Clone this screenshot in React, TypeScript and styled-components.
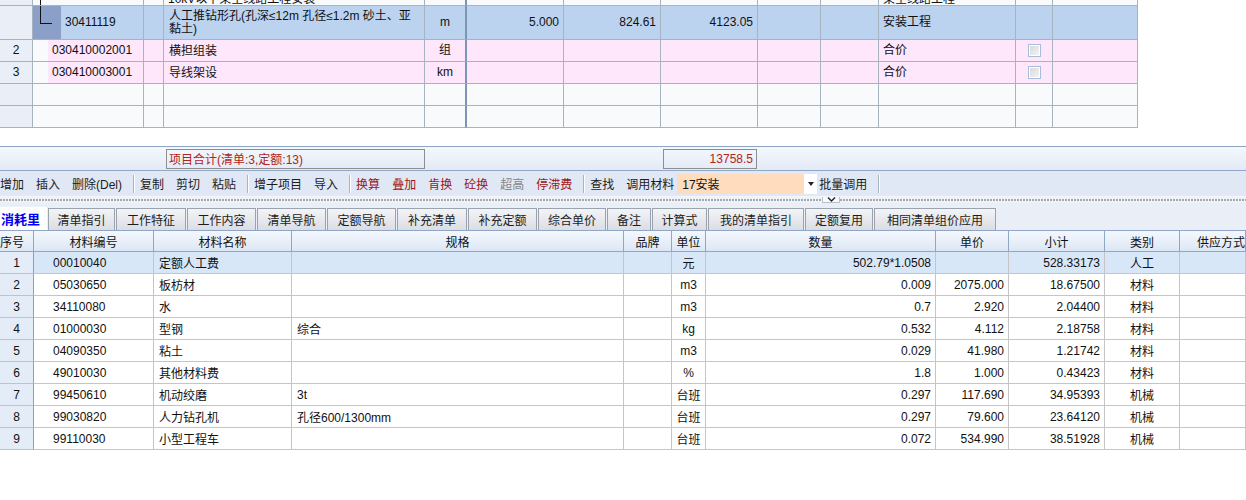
import React from 'react';
import styled, { createGlobalStyle } from 'styled-components';

const GlobalStyle = createGlobalStyle`
  html, body { margin: 0; padding: 0; background: #fff; overflow: hidden; }
  body { font: 12px "Liberation Sans", "Noto Sans CJK SC", sans-serif; color: #111; }
  * { box-sizing: border-box; }
`;

// ---------- top grid (清单) ----------
type Tone = 'head' | 'blue' | 'pink' | 'empty';
const toneBg: Record<Tone, string> = {
  head: '#e9eef7',
  blue: '#bcd3f0',
  pink: '#fee6fb',
  empty: '#f9fafc',
};
type Align = 'left' | 'center' | 'right';
const justify = (a?: Align) => (a === 'right' ? 'flex-end' : a === 'center' ? 'center' : 'flex-start');

const topCols = [33, 111, 20, 261, 42, 97, 97, 97, 63, 58, 137, 37, 85];

const TopGrid = styled.div`
  display: grid;
  width: 1138px;
  grid-template-columns: ${topCols.map((c) => c + 'px').join(' ')};
  grid-template-rows: 6px 34px 22px 22px 22px 22px;
`;

const TCell = styled.div<{ $tone: Tone; $align?: Align; $thick?: boolean; $bare?: boolean; $cut?: boolean }>`
  display: flex;
  align-items: ${(p) => (p.$cut ? 'flex-end' : 'center')};
  justify-content: ${(p) => justify(p.$align)};
  padding: ${(p) => (p.$bare ? '0' : '0 4px')};
  background: ${(p) => toneBg[p.$tone]};
  border-right: ${(p) => (p.$thick ? '2px solid #7d94b5' : '1px solid #a8b3c0')};
  border-bottom: 1px solid #a8b3c0;
  overflow: hidden;
  white-space: nowrap;
  line-height: 13px;
`;

// only the lower strokes of the row above show in the reference
const CutText = styled.span`
  line-height: 12px;
  flex: none;
`;

const TreeStub = styled.span`
  align-self: stretch;
  margin-left: 7px;
  border-left: 1px solid #111;
`;

const Indent = styled.span`
  align-self: stretch;
  width: 15px;
  flex: none;
  background: #f9fafc;
`;

const TreeBlock = styled.span`
  align-self: stretch;
  width: 28px;
  flex: none;
  background: #8aa0c8;
  display: flex;
`;

const TreeLine = styled.span`
  margin-left: 7px;
  width: 12px;
  height: 18px;
  border-left: 1px solid #111;
  border-bottom: 1px solid #111;
`;

const CodeText = styled.span`
  padding-left: 4px;
`;

const Name = styled.span`
  padding-left: 1px;
  padding-top: 1px;
`;

const CheckBox = styled.span`
  width: 13px;
  height: 13px;
  border: 1px solid #a6bedb;
  background: linear-gradient(135deg, #d6d6d6, #f6f6f6);
  box-shadow: inset 0 0 0 1px #fff;
`;

type TopRowData = {
  tone: 'blue' | 'pink' | 'empty';
  no?: string;
  code?: string;
  name?: React.ReactNode;
  unit?: string;
  qty?: string;
  price?: string;
  total?: string;
  kind?: string;
  check?: boolean;
};

const topRows: TopRowData[] = [
  {
    tone: 'blue',
    code: '30411119',
    name: (
      <>
        人工推钻形孔(孔深≤12m 孔径≤1.2m 砂土、亚
        <br />
        黏土)
      </>
    ),
    unit: 'm',
    qty: '5.000',
    price: '824.61',
    total: '4123.05',
    kind: '安装工程',
  },
  { tone: 'pink', no: '2', code: '030410002001', name: '横担组装', unit: '组', kind: '合价', check: true },
  { tone: 'pink', no: '3', code: '030410003001', name: '导线架设', unit: 'km', kind: '合价', check: true },
  { tone: 'empty' },
  { tone: 'empty' },
];

const TopRow = ({ r }: { r: TopRowData }) => (
  <>
    <TCell $tone="head" $align="center">{r.no}</TCell>
    <TCell $tone={r.tone} $bare>
      {r.tone === 'blue' && (
        <TreeBlock>
          <TreeLine />
        </TreeBlock>
      )}
      {r.tone === 'pink' && <Indent />}
      {r.code && <CodeText>{r.code}</CodeText>}
    </TCell>
    <TCell $tone={r.tone} />
    <TCell $tone={r.tone}>
      <Name>{r.name}</Name>
    </TCell>
    <TCell $tone={r.tone} $align="center" $thick>{r.unit}</TCell>
    <TCell $tone={r.tone} $align="right">{r.qty}</TCell>
    <TCell $tone={r.tone} $align="right">{r.price}</TCell>
    <TCell $tone={r.tone} $align="right">{r.total}</TCell>
    <TCell $tone={r.tone} />
    <TCell $tone={r.tone} />
    <TCell $tone={r.tone}>{r.kind}</TCell>
    <TCell $tone={r.tone} $align="center">{r.check && <CheckBox />}</TCell>
    <TCell $tone={r.tone} />
  </>
);

// ---------- summary / toolbar ----------
const SummaryBar = styled.div`
  margin-top: 18px;
  height: 24px;
  border-top: 1px solid #8fa5c4;
  background: linear-gradient(#f4f8fd, #e3eaf6);
  display: grid;
  grid-template-columns: 166px 259px 238px 94px;
  align-items: center;
`;

const SumBox = styled.div<{ $col: number; $right?: boolean }>`
  grid-column: ${(p) => p.$col};
  height: 20px;
  border: 1px solid #8e8e8e;
  color: #b3221b;
  padding: 0 3px 0 2px;
  display: flex;
  align-items: center;
  justify-content: ${(p) => (p.$right ? 'flex-end' : 'flex-start')};
  font-size: 12px;
`;

const Toolbar = styled.div`
  height: 27px;
  border-top: 1px solid #91a7c6;
  border-bottom: 1px solid #f4f6fa;
  background: #e1e8f5;
  display: flex;
  align-items: center;
`;

const ToolItem = styled.span<{ $color?: string }>`
  color: ${(p) => p.$color || '#1c1c1c'};
  margin-right: 12px;
  white-space: nowrap;
`;

const ToolSep = styled.span`
  width: 1px;
  height: 18px;
  background: #a9b3c1;
  box-shadow: 1px 0 0 #fff;
  margin: 0 6px 0 -1px;
`;

const Combo = styled.div`
  display: flex;
  height: 20px;
  margin: 0 2px 0 -9px;
`;

const ComboField = styled.div`
  width: 127px;
  background: #ffdcbd;
  padding-left: 5px;
  display: flex;
  align-items: center;
`;

const ComboArrow = styled.div`
  width: 13px;
  background: #fff;
  display: flex;
  align-items: center;
  justify-content: center;
  &::after {
    content: '';
    border-left: 3px solid transparent;
    border-right: 3px solid transparent;
    border-top: 4px solid #222;
  }
`;

type Tool = { t: string; c?: string } | 'sep';
const RED = '#9e1414';
const tools: Tool[] = [
  { t: '增加' },
  { t: '插入' },
  { t: '删除(Del)' },
  'sep',
  { t: '复制' },
  { t: '剪切' },
  { t: '粘贴' },
  'sep',
  { t: '增子项目' },
  { t: '导入' },
  'sep',
  { t: '换算', c: RED },
  { t: '叠加', c: RED },
  { t: '肯换', c: RED },
  { t: '砼换', c: RED },
  { t: '超高', c: '#858585' },
  { t: '停滞费', c: RED },
  'sep',
  { t: '查找' },
  { t: '调用材料' },
];

// ---------- splitter / tabs ----------
const Splitter = styled.div`
  height: 6px;
  background: #eef1f6;
  display: flex;
  align-items: center;
`;

const Dots = styled.div<{ $w?: number }>`
  flex: ${(p) => (p.$w ? `0 0 ${p.$w}px` : '1')};
  height: 2px;
  background: repeating-linear-gradient(90deg, #a3abb8 0 2px, transparent 2px 3px);
`;

const Handle = styled.div`
  width: 18px;
  height: 6px;
  align-self: flex-start;
  background: #f7f9fb;
  border: 1px solid #b7c1ce;
  border-top: none;
  display: flex;
  justify-content: center;
`;

const TabStrip = styled.div`
  height: 27px;
  background: #e9eef7;
  display: flex;
  align-items: flex-end;
  gap: 1px;
`;

const Tab = styled.div<{ $w: number; $active?: boolean }>`
  width: ${(p) => p.$w}px;
  height: ${(p) => (p.$active ? 23 : 22)}px;
  display: flex;
  align-items: center;
  justify-content: ${(p) => (p.$active ? 'flex-start' : 'center')};
  padding-left: ${(p) => (p.$active ? 1 : 0)}px;
  white-space: nowrap;
  border: ${(p) => (p.$active ? 'none' : '1px solid #9aa3ae')};
  border-bottom: none;
  background: ${(p) => (p.$active ? '#fff' : 'linear-gradient(#f3f4f7, #dadde3)')};
  color: ${(p) => (p.$active ? '#0000f2' : '#1c1c1c')};
  font-weight: ${(p) => (p.$active ? 700 : 400)};
  font-size: ${(p) => (p.$active ? 13 : 12)}px;
`;

const tabs: [string, number][] = [
  ['清单指引', 67],
  ['工作特征', 70],
  ['工作内容', 69],
  ['清单导航', 69],
  ['定额导航', 69],
  ['补充清单', 70],
  ['补充定额', 69],
  ['综合单价', 68],
  ['备注', 44],
  ['计算式', 55],
  ['我的清单指引', 96],
  ['定额复用', 68],
  ['相同清单组价应用', 122],
];

// ---------- materials grid ----------
const MatGrid = styled.div`
  display: grid;
  grid-template-columns: 34px 120px 138px 332px 48px 34px 230px 73px 96px 75px 1fr;
  grid-auto-rows: 22px;
`;

const HCell = styled.div<{ $align?: Align; $pad?: number }>`
  display: flex;
  align-items: center;
  justify-content: ${(p) => justify(p.$align)};
  padding-left: ${(p) => p.$pad || 0}px;
  white-space: nowrap;
  overflow: hidden;
  border-top: 1px solid #8fa6c6;
  border-bottom: 1px solid #8fa6c6;
  border-right: 1px solid #8fa6c6;
  background: linear-gradient(#f4f8fd, #dce7f5);
`;

const MCell = styled.div<{ $align?: Align; $sel?: boolean; $pl?: number; $pr?: number }>`
  display: flex;
  align-items: center;
  justify-content: ${(p) => justify(p.$align)};
  padding: 0 ${(p) => p.$pr || 0}px 0 ${(p) => p.$pl || 0}px;
  white-space: nowrap;
  overflow: hidden;
  background: ${(p) => (p.$sel ? '#d8e7f8' : '#fff')};
  border-right: 1px solid #c5c5c5;
  border-bottom: 1px solid #c5c5c5;
`;

const NoCell = styled.div`
  display: flex;
  align-items: center;
  justify-content: center;
  background: #e4ecf8;
  border-right: 1px solid #88a2c4;
  border-bottom: 1px solid #b4c4da;
`;

type Mat = [string, string, string, string, string, string, string, string, string];
const mats: Mat[] = [
  ['00010040', '定额人工费', '', '元', '502.79*1.0508', '', '528.33173', '人工', ''],
  ['05030650', '板枋材', '', 'm3', '0.009', '2075.000', '18.67500', '材料', ''],
  ['34110080', '水', '', 'm3', '0.7', '2.920', '2.04400', '材料', ''],
  ['01000030', '型钢', '综合', 'kg', '0.532', '4.112', '2.18758', '材料', ''],
  ['04090350', '粘土', '', 'm3', '0.029', '41.980', '1.21742', '材料', ''],
  ['49010030', '其他材料费', '', '%', '1.8', '1.000', '0.43423', '材料', ''],
  ['99450610', '机动绞磨', '3t', '台班', '0.297', '117.690', '34.95393', '机械', ''],
  ['99030820', '人力钻孔机', '孔径600/1300mm', '台班', '0.297', '79.600', '23.64120', '机械', ''],
  ['99110030', '小型工程车', '', '台班', '0.072', '534.990', '38.51928', '机械', ''],
];

export default function App() {
  return (
    <>
      <GlobalStyle />
      <TopGrid>
        <TCell $tone="head" />
        <TCell $tone="empty" $bare>
          <TreeStub />
        </TCell>
        <TCell $tone="empty" />
        <TCell $tone="empty" $cut>
          <CutText>10kV以下架空线路工程安装</CutText>
        </TCell>
        <TCell $tone="empty" $thick />
        <TCell $tone="empty" />
        <TCell $tone="empty" />
        <TCell $tone="empty" />
        <TCell $tone="empty" />
        <TCell $tone="empty" />
        <TCell $tone="empty" $cut>
          <CutText>架空线路工程</CutText>
        </TCell>
        <TCell $tone="empty" />
        <TCell $tone="empty" />
        {topRows.map((r, i) => (
          <TopRow key={i} r={r} />
        ))}
      </TopGrid>

      <SummaryBar>
        <SumBox $col={2}>项目合计(清单:3,定额:13)</SumBox>
        <SumBox $col={4} $right>13758.5</SumBox>
      </SummaryBar>

      <Toolbar>
        {tools.map((t, i) =>
          t === 'sep' ? <ToolSep key={i} /> : <ToolItem key={i} $color={t.c}>{t.t}</ToolItem>
        )}
        <Combo>
          <ComboField>17安装</ComboField>
          <ComboArrow />
        </Combo>
        <ToolItem>批量调用</ToolItem>
        <ToolSep />
      </Toolbar>

      <Splitter>
        <Dots $w={822} />
        <Handle>
          <svg width="9" height="5" viewBox="0 0 9 5">
            <polyline points="1,0.5 4.5,4 8,0.5" fill="none" stroke="#222" strokeWidth="1.4" />
          </svg>
        </Handle>
        <Dots />
      </Splitter>

      <TabStrip>
        <Tab $w={47} $active>消耗里</Tab>
        {tabs.map(([t, w]) => (
          <Tab key={t} $w={w}>{t}</Tab>
        ))}
      </TabStrip>

      <MatGrid>
        <HCell>序号</HCell>
        <HCell $align="center">材料编号</HCell>
        <HCell $align="center">材料名称</HCell>
        <HCell $align="center">规格</HCell>
        <HCell $align="center">品牌</HCell>
        <HCell $align="center">单位</HCell>
        <HCell $align="center">数量</HCell>
        <HCell $align="center">单价</HCell>
        <HCell $align="center">小计</HCell>
        <HCell $align="center">类别</HCell>
        <HCell $pad={17}>供应方式</HCell>
        {mats.map((m, i) => {
          const sel = i === 0;
          return (
            <React.Fragment key={i}>
              <NoCell>{i + 1}</NoCell>
              <MCell $sel={sel} $pl={19}>{m[0]}</MCell>
              <MCell $sel={sel} $pl={5}>{m[1]}</MCell>
              <MCell $sel={sel} $pl={5}>{m[2]}</MCell>
              <MCell $sel={sel} />
              <MCell $sel={sel} $align="center">{m[3]}</MCell>
              <MCell $sel={sel} $align="right" $pr={4}>{m[4]}</MCell>
              <MCell $sel={sel} $align="right" $pr={4}>{m[5]}</MCell>
              <MCell $sel={sel} $align="right" $pr={4}>{m[6]}</MCell>
              <MCell $sel={sel} $align="center">{m[7]}</MCell>
              <MCell $sel={sel}>{m[8]}</MCell>
            </React.Fragment>
          );
        })}
      </MatGrid>
    </>
  );
}
